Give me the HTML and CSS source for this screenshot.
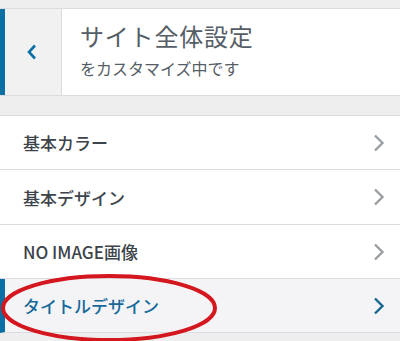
FILE: index.html
```html
<!DOCTYPE html>
<html lang="ja">
<head>
<meta charset="utf-8">
<link rel="stylesheet" href="styles.css">
</head>
<body>
<div class="panel">
  <div class="topstrip"></div>
  <div class="header">
    <div class="back">
      <svg width="12" height="16" viewBox="0 0 12 16"><path d="M9 1.5 L3 8 L9 14.5" fill="none" stroke="#0a6fa3" stroke-width="2.6"/></svg>
    </div>
    <div class="titles">
      <div class="title">サイト全体設定</div>
      <div class="sub">をカスタマイズ中です</div>
    </div>
  </div>
  <div class="gap"></div>
  <ul class="menu">
    <li class="row"><span>基本カラー</span><svg class="chev" width="12" height="18" viewBox="0 0 12 18"><path d="M2 1.5 L9.5 9 L2 16.5" fill="none" stroke="#9a9fa4" stroke-width="2.4"/></svg></li>
    <li class="row tall"><span>基本デザイン</span><svg class="chev" width="12" height="18" viewBox="0 0 12 18"><path d="M2 1.5 L9.5 9 L2 16.5" fill="none" stroke="#9a9fa4" stroke-width="2.4"/></svg></li>
    <li class="row"><span>NO IMAGE画像</span><svg class="chev" width="12" height="18" viewBox="0 0 12 18"><path d="M2 1.5 L9.5 9 L2 16.5" fill="none" stroke="#9a9fa4" stroke-width="2.4"/></svg></li>
    <li class="row active"><span>タイトルデザイン</span><svg class="chev" width="12" height="18" viewBox="0 0 12 18"><path d="M2 1.5 L9.5 9 L2 16.5" fill="none" stroke="#17668f" stroke-width="2.4"/></svg></li>
  </ul>
  <svg class="mark" width="240" height="80" viewBox="0 0 240 80"><ellipse cx="109" cy="34" rx="106" ry="32" fill="none" stroke="#d4161f" stroke-width="4"/></svg>
</div>
</body>
</html>
```
FILE: styles.css
```css
html, body {
  margin: 0;
  padding: 0;
  background: #eeeeee;
  font-family: "Noto Sans CJK JP", "Noto Sans", sans-serif;
}
.panel {
  position: relative;
  width: 400px;
  height: 341px;
  overflow: hidden;
}
.topstrip {
  height: 8px;
  border-bottom: 1px solid #dcdcde;
}
.header {
  display: flex;
  height: 86px;
  background: #fff;
  border-bottom: 1px solid #dcdcde;
}
.back {
  width: 54px;
  border-left: 5px solid #0a6fa3;
  border-right: 1px solid #dcdcde;
  background: #f1f1f2;
  display: flex;
  align-items: center;
  justify-content: center;
  padding-right: 2px;
  box-sizing: content-box;
}
.titles {
  padding-left: 18px;
  padding-top: 11px;
}
.title {
  font-size: 24px;
  color: #555d66;
  line-height: 32px;
  letter-spacing: 0.8px;
}
.sub {
  font-size: 16px;
  color: #555d66;
  line-height: 24px;
  margin-top: 4px;
}
.gap {
  height: 19px;
  border-bottom: 1px solid #dcdcde;
}
.menu {
  list-style: none;
  margin: 0;
  padding: 0;
}
.row {
  height: 53px;
  display: flex;
  align-items: center;
  justify-content: space-between;
  padding: 0 15px 0 23px;
  background: #fff;
  border-bottom: 1px solid #dcdcde;
  font-size: 17px;
  font-weight: 500;
  color: #3c434a;
}
.row.tall {
  height: 54px;
}
.row.active {
  background: #f4f4f6;
  color: #16699a;
  border-left: 5px solid #0a6fa3;
  padding-left: 18px;
}
.chev {
  display: block;
}
.mark {
  position: absolute;
  left: 0;
  top: 274px;
}
```
